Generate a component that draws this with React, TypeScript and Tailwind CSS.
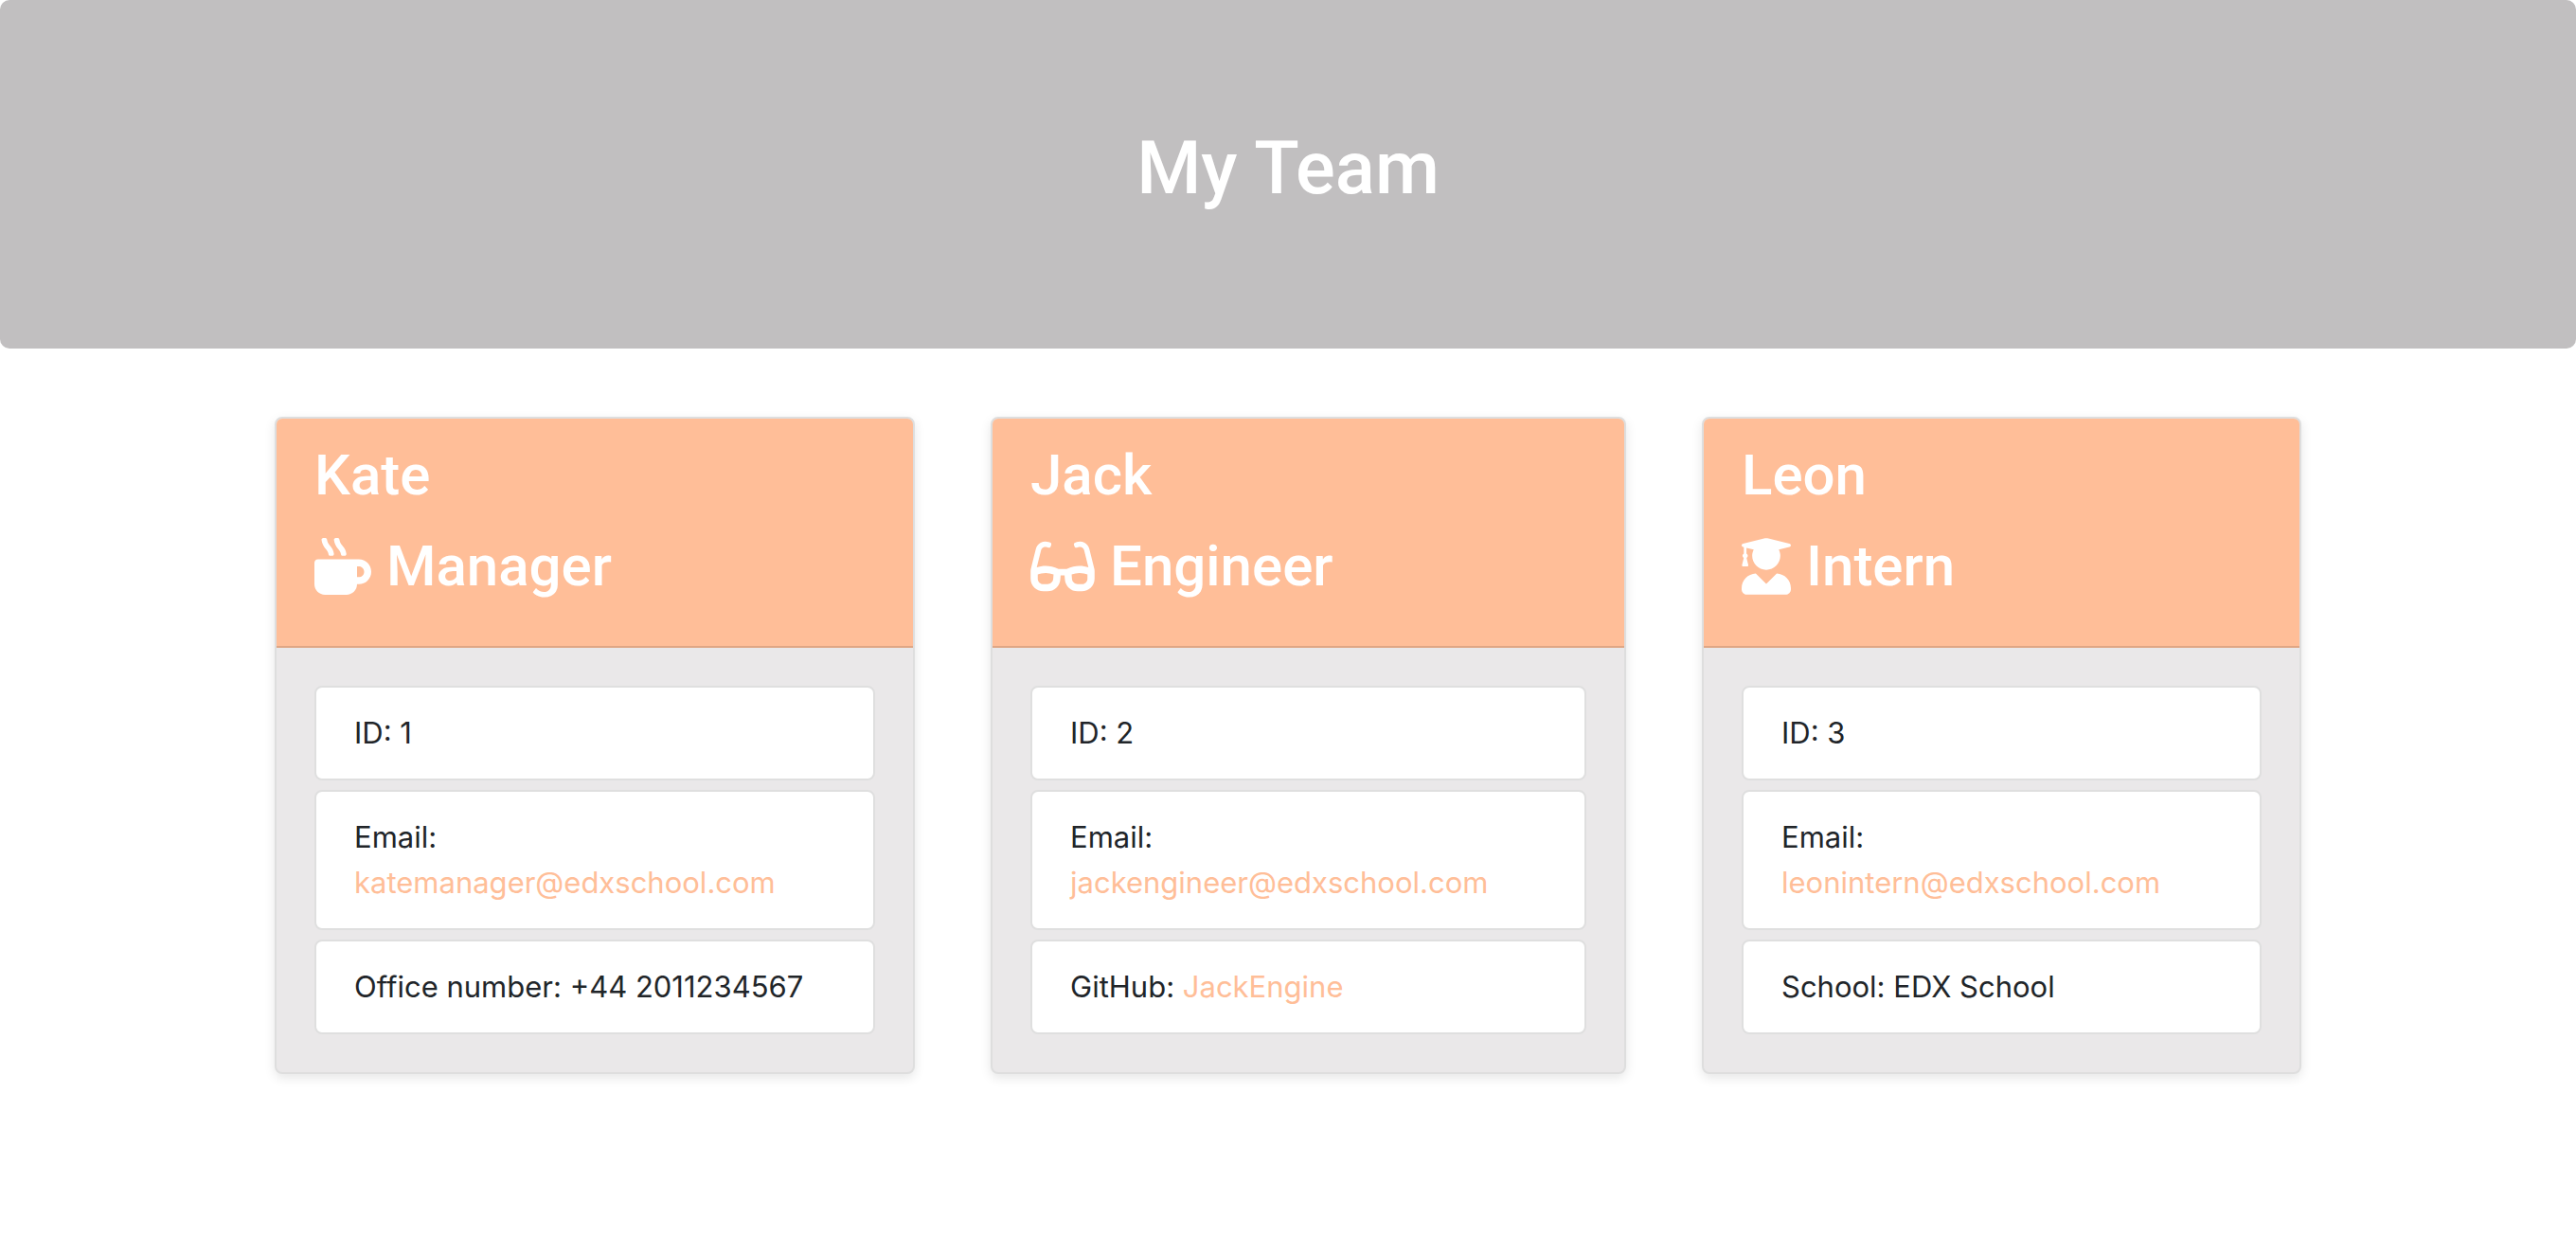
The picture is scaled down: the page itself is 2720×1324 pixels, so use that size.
import type { ReactNode } from "react";
import type { IconType } from "react-icons";
import { FaGlasses, FaMugHot, FaUserGraduate } from "react-icons/fa";

type Member = {
  name: string;
  role: string;
  icon: IconType;
  iconWidth: string;
  id: number;
  email: string;
  detail: ReactNode;
};

const linkStyle = "text-[#ffbe98] hover:underline";

const team: Member[] = [
  {
    name: "Kate",
    role: "Manager",
    icon: FaMugHot,
    iconWidth: "w-[60px]",
    id: 1,
    email: "katemanager@edxschool.com",
    detail: "Office number: +44 2011234567",
  },
  {
    name: "Jack",
    role: "Engineer",
    icon: FaGlasses,
    iconWidth: "w-[68px]",
    id: 2,
    email: "jackengineer@edxschool.com",
    detail: (
      <>
        GitHub:{" "}
        <a className={linkStyle} href="https://github.com/JackEngine">
          JackEngine
        </a>
      </>
    ),
  },
  {
    name: "Leon",
    role: "Intern",
    icon: FaUserGraduate,
    iconWidth: "w-[52px]",
    id: 3,
    email: "leonintern@edxschool.com",
    detail: "School: EDX School",
  },
];

function Item({ children }: { children: ReactNode }) {
  return (
    <li className="rounded-lg border-2 border-[#dfdfdf] bg-white px-10 py-6 text-[31px] leading-[48px]">
      {children}
    </li>
  );
}

function MemberCard({ name, role, icon: Icon, iconWidth, id, email, detail }: Member) {
  return (
    <article className="overflow-hidden rounded-lg border-2 border-[#dedede] bg-[#eae8e9] shadow-[0_4px_12px_rgba(0,0,0,0.1)]">
      <header className="flex flex-col gap-6 border-b-2 border-[#dfa685] bg-[#ffbe98] px-10 pt-6 pb-12 font-['Roboto',sans-serif] text-[60px] leading-[72px] font-medium text-white">
        <h2>{name}</h2>
        <h3 className="flex items-center gap-4">
          <Icon className={`h-[60px] shrink-0 ${iconWidth}`} aria-hidden="true" />
          {role}
        </h3>
      </header>
      <ul className="flex flex-col gap-[10px] p-10">
        <Item>ID: {id}</Item>
        <Item>
          <span className="block">Email:</span>
          <a className={linkStyle} href={`mailto:${email}`}>
            {email}
          </a>
        </Item>
        <Item>{detail}</Item>
      </ul>
    </article>
  );
}

export default function App() {
  return (
    <div className="min-h-screen bg-white font-['Inter',sans-serif] text-[#212529]">
      <header className="rounded-[10px] bg-[#c1bfc0] pt-32 pb-[140px] text-center">
        <h1 className="font-['Roboto',sans-serif] text-[78px] leading-[100px] font-medium text-white">
          My Team
        </h1>
      </header>
      <main className="mx-auto grid max-w-[2280px] grid-cols-[676fr_671fr_633fr] gap-20 px-[70px] py-[72px]">
        {team.map((member) => (
          <MemberCard key={member.id} {...member} />
        ))}
      </main>
    </div>
  );
}
